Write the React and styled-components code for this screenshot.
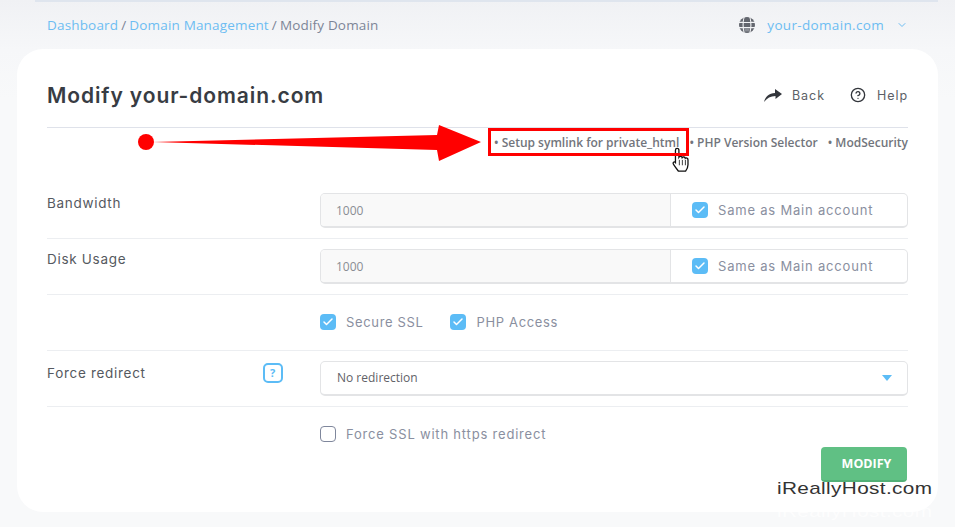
import styled, { createGlobalStyle } from "styled-components";
import { FiHelpCircle } from "react-icons/fi";
import { Check, ChevronDown } from "lucide-react";

const Global = createGlobalStyle`
  html, body {
    margin: 0;
    padding: 0;
    background: #f8f9fa;
  }
  * {
    box-sizing: border-box;
  }
`;

const Page = styled.div`
  position: relative;
  width: 955px;
  height: 527px;
  overflow: hidden;
  font-family: "Inter", "Liberation Sans", sans-serif;
  background: linear-gradient(to bottom, #f0f1f4 0, #f6f7f9 50px, #f8f9fa 100px);
`;

const TopStrip = styled.div`
  height: 2px;
  margin: 0 17px 0 35px;
  background: #dfe5ee;
`;

const TopBar = styled.div`
  height: 47px;
  padding: 0 47px;
  display: flex;
  align-items: center;
  justify-content: space-between;
  font-family: "Open Sans", sans-serif;
  font-size: 13.5px;
  color: #7d8597;
`;

const Crumbs = styled.div`
  display: flex;
  gap: 3px;
  margin-top: -1px;
  letter-spacing: 0.17px;
`;

const Crumb = styled.span`
  color: ${(p) => (p.$link ? "#6dbdf2" : "#7d8597")};
`;

const DomainPick = styled.div`
  display: flex;
  align-items: center;
  color: #6dbdf2;
  margin-top: -1px;
  letter-spacing: 0.33px;
  svg.globe {
    margin-right: 12px;
  }
  svg.chev {
    margin-left: 12px;
  }
`;

const Card = styled.div`
  width: 921px;
  height: 463px;
  margin-left: 17px;
  padding: 0 30px;
  background: #fff;
  border-radius: 26px;
`;

const CardHead = styled.div`
  height: 79px;
  display: flex;
  align-items: center;
  justify-content: space-between;
  border-bottom: 1px solid #dfe2ea;
  padding: 16px 0 2px;
`;

const Title = styled.h1`
  margin: 0;
  font-size: 21px;
  font-weight: 600;
  letter-spacing: 0.9px;
  color: #383c43;
`;

const HeadActions = styled.div`
  display: flex;
  align-items: center;
  gap: 25px;
`;

const HeadAction = styled.span`
  display: flex;
  align-items: center;
  gap: ${(p) => p.$gap}px;
  font-size: 12.5px;
  letter-spacing: 0.95px;
  color: #5c5f66;
  svg {
    color: #33363c;
  }
`;

const Tabs = styled.div`
  height: 30px;
  padding-bottom: 2px;
  display: flex;
  align-items: center;
  justify-content: flex-end;
  gap: 10px;
  font-family: "Open Sans", sans-serif;
  font-size: 12px;
  font-weight: 600;
  color: #72757c;
  margin-bottom: 25px;
`;

const Tab = styled.span`
  white-space: nowrap;
`;

const Row = styled.div`
  display: grid;
  grid-template-columns: 273px 1fr;
  padding: ${(p) => (p.$last ? "10px 0 0" : "10px 0")};
  border-bottom: ${(p) => (p.$last ? "none" : "1px solid #eceef1")};
`;

const Label = styled.div`
  position: relative;
  padding-top: ${(p) => p.$drop ?? 0}px;
  font-size: 13.5px;
  letter-spacing: 0.7px;
  line-height: 20px;
  color: #555960;
`;

const HelpBadge = styled.span`
  position: absolute;
  left: 216px;
  top: 2px;
  width: 20px;
  height: 20px;
  border: 2px solid #5cbcf6;
  border-radius: 5px;
  display: flex;
  align-items: center;
  justify-content: center;
  font-family: "Open Sans", sans-serif;
  font-size: 11px;
  font-weight: 700;
  color: #5cbcf6;
`;

const InputGroup = styled.div`
  height: 35px;
  display: grid;
  grid-template-columns: 350px 1fr;
  border: 1px solid #e3e4e6;
  border-bottom-width: 2px;
  border-radius: 5px;
  overflow: hidden;
`;

const InputCell = styled.div`
  background: #f9f9f9;
  border-right: 1px solid #e3e4e6;
  padding-left: 15px;
  display: flex;
  align-items: center;
  font-family: "Open Sans", sans-serif;
  font-size: 12px;
  color: #8a8d94;
`;

const SameCell = styled.div`
  display: flex;
  align-items: center;
  padding-left: 21px;
`;

const Checks = styled.div`
  height: 35px;
  padding-bottom: 2px;
  display: flex;
  align-items: center;
  gap: 27px;
`;

const CheckItem = styled.label`
  display: flex;
  align-items: center;
  gap: 10px;
  font-size: 13px;
  letter-spacing: ${(p) => (p.$tight ? "0.65px" : "0.8px")};
  color: #8a8fa0;
`;

const Box = styled.span`
  width: 16px;
  height: 16px;
  border-radius: 4px;
  display: flex;
  align-items: center;
  justify-content: center;
  background: ${(p) => (p.$on ? "#5cbcf6" : "#fff")};
  border: ${(p) => (p.$on ? "none" : "1px solid #7f879c")};
  color: #fff;
`;

const Select = styled.div`
  height: 35px;
  display: flex;
  align-items: center;
  justify-content: space-between;
  padding: 0 15px 1px 16px;
  border: 1px solid #e3e4e6;
  border-bottom-width: 2px;
  border-radius: 5px;
  font-family: "Open Sans", sans-serif;
  font-size: 12px;
  color: #5f6268;
`;

const Caret = styled.span`
  width: 0;
  height: 0;
  border-left: 5.5px solid transparent;
  border-right: 5.5px solid transparent;
  border-top: 6px solid #5cbcf6;
`;

const Footer = styled.div`
  display: flex;
  justify-content: flex-end;
  margin-top: -5px;
  padding-right: 1px;
`;

const Modify = styled.button`
  width: 86px;
  height: 35px;
  padding: 0 0 0 5px;
  border: none;
  border-bottom: 2px solid #52b077;
  border-radius: 4px;
  background: #60c084;
  color: #fff;
  font-family: "Open Sans", sans-serif;
  font-size: 12.5px;
  font-weight: 700;
`;

const Annotation = styled.svg`
  position: absolute;
  left: 0;
  top: 0;
  pointer-events: none;
`;

const Highlight = styled.div`
  position: absolute;
  left: 488px;
  top: 128px;
  width: 201px;
  height: 28px;
  border: 3px solid #f00;
`;

const Watermark = styled.div`
  position: absolute;
  left: 777px;
  top: 479px;
  font-family: "Liberation Sans", sans-serif;
  font-size: 17px;
  letter-spacing: 0.3px;
  line-height: 19px;
  color: #333;
  transform: scaleX(1.22);
  transform-origin: left center;
  &::after {
    content: "iReallyHost.com";
    position: absolute;
    left: 0;
    top: 23px;
    color: #fff;
    opacity: 0.75;
  }
`;

const Globe = () => (
  <svg className="globe" width="16" height="16" viewBox="0 0 16 16">
    <circle cx="8" cy="8" r="8" fill="#63666e" />
    <path d="M0 5.4h16M0 10.6h16M5.2 0C3.8 5 3.8 11 5.2 16M10.8 0C12.2 5 12.2 11 10.8 16" stroke="#f2f3f5" strokeWidth="1.1" fill="none" />
    <path d="M5.4 1.4h5.2l.7 3.6H4.7z" fill="#63666e" />
    <path d="M5.4 11h5.2l-.4 3.4H5.8z" fill="#8b8e95" />
  </svg>
);

const BackArrow = () => (
  <svg width="18" height="13" viewBox="0 0 18 13">
    <path d="M0 13C1.5 7 5 4.5 11 4V0L18 5 11.5 10V7C6.5 7 3 9 0 13Z" fill="currentColor" />
  </svg>
);

const SameAs = () => (
  <CheckItem>
    <Box $on>
      <Check size={12} strokeWidth={3} />
    </Box>
    Same as Main account
  </CheckItem>
);

export default function App() {
  return (
    <Page>
      <Global />
      <TopStrip />
      <TopBar>
        <Crumbs>
          <Crumb $link>Dashboard</Crumb>
          <Crumb>/</Crumb>
          <Crumb $link>Domain Management</Crumb>
          <Crumb>/</Crumb>
          <Crumb>Modify Domain</Crumb>
        </Crumbs>
        <DomainPick>
          <Globe />
          your-domain.com
          <ChevronDown className="chev" size={12} strokeWidth={2} />
        </DomainPick>
      </TopBar>
      <Card>
        <CardHead>
          <Title>Modify your-domain.com</Title>
          <HeadActions>
            <HeadAction $gap={10}>
              <BackArrow />
              Back
            </HeadAction>
            <HeadAction $gap={11}>
              <FiHelpCircle size={16} />
              Help
            </HeadAction>
          </HeadActions>
        </CardHead>
        <Tabs>
          <Tab>• Setup symlink for private_html</Tab>
          <Tab>• PHP Version Selector</Tab>
          <Tab>• ModSecurity</Tab>
        </Tabs>
        <Row>
          <Label>Bandwidth</Label>
          <InputGroup>
            <InputCell>1000</InputCell>
            <SameCell>
              <SameAs />
            </SameCell>
          </InputGroup>
        </Row>
        <Row>
          <Label>Disk Usage</Label>
          <InputGroup>
            <InputCell>1000</InputCell>
            <SameCell>
              <SameAs />
            </SameCell>
          </InputGroup>
        </Row>
        <Row>
          <Label />
          <Checks>
            <CheckItem $tight>
              <Box $on>
                <Check size={12} strokeWidth={3} />
              </Box>
              Secure SSL
            </CheckItem>
            <CheckItem $tight>
              <Box $on>
                <Check size={12} strokeWidth={3} />
              </Box>
              PHP Access
            </CheckItem>
          </Checks>
        </Row>
        <Row>
          <Label $drop={2}>
            Force redirect
            <HelpBadge>?</HelpBadge>
          </Label>
          <Select>
            No redirection
            <Caret />
          </Select>
        </Row>
        <Row $last>
          <Label />
          <Checks>
            <CheckItem>
              <Box />
              Force SSL with https redirect
            </CheckItem>
          </Checks>
        </Row>
        <Footer>
          <Modify>MODIFY</Modify>
        </Footer>
      </Card>

      <Annotation width="955" height="527" viewBox="0 0 955 527">
        <circle cx="146" cy="142" r="8" fill="#f00" />
        <path d="M152 142 L437 135 L439 125 L481 142 L439 161 L437 150 Z" fill="#f00" />
        <g transform="translate(672 148) scale(1.08)">
          <path
            d="M3.2 2c0-2.2 3.2-2.2 3.2 0v6.5c.6-1 2.7-1 3 .4.6-.9 2.6-.8 2.9.6.8-.6 2.5-.2 2.5 1.4v4.6c0 2.8-1.2 4.6-2.2 6H6c-1.2-1.6-2.6-3.4-4.6-6.4-1.2-1.8.6-3 1.8-1.7V2z"
            fill="#fff"
            stroke="#111"
            strokeWidth="1.2"
          />
          <path d="M6.8 11v5M9.6 11v5M12.4 11v5" stroke="#222" strokeWidth=".8" />
        </g>
      </Annotation>
      <Highlight />
      <Watermark>iReallyHost.com</Watermark>
    </Page>
  );
}
